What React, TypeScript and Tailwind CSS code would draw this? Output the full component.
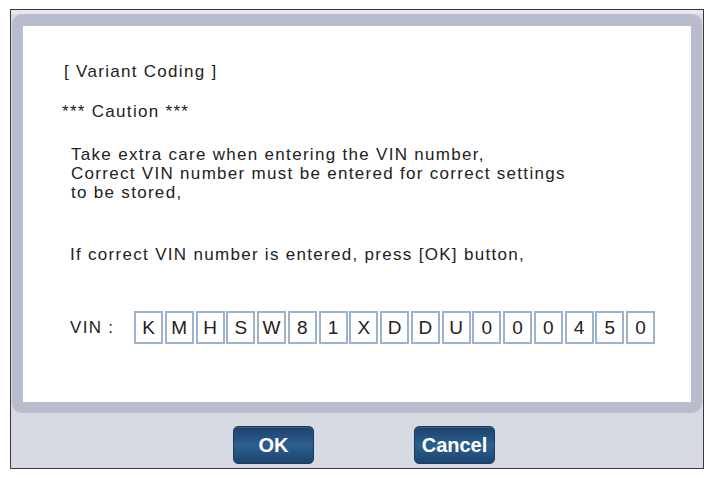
import React from 'react';

const vin = 'KMHSW81XDDU000450'.split('');

const textFont = { fontFamily: '"Liberation Sans", "Noto Sans CJK KR", sans-serif' };

const DialogButton: React.FC<{ label: string }> = ({ label }) => (
  <button
    className="w-[81px] h-[38px] rounded-[5px] border border-[#1a3a60] bg-gradient-to-b from-[#1d426c] via-[#2d5f8e] to-[#1d4570] text-white text-[20px] font-bold shadow-[inset_0_1px_0_rgba(255,255,255,0.15)]"
    style={textFont}
  >
    {label}
  </button>
);

export default function App() {
  return (
    <div className="w-[713px] h-[478px] bg-white pt-[9px] pl-[10px]" style={textFont}>
      {/* Frame */}
      <div className="w-[694px] h-[460px] border border-[#3a3a3a] bg-[#d5dae3] flex flex-col">
        <div className="h-[4px] bg-[#e6e9ef]" />
        {/* Panel */}
        <div className="mx-[1px] h-[399px] rounded-[10px] bg-[#b8bdcd] p-[11px] pt-[12px]">
          <div className="h-full bg-white pl-[41px] pt-[36px] text-[#222] text-[17px] leading-[19px] tracking-[1.3px]">
            <p>[ Variant Coding ]</p>
            <p className="mt-[21px] -ml-[2px]">*** Caution ***</p>
            <div className="mt-[24px] pl-[7px]">
              <p>Take extra care when entering the VIN number,</p>
              <p>Correct VIN number must be entered for correct settings</p>
              <p>to be stored,</p>
            </div>
            <p className="mt-[43px] pl-[6px]">If correct VIN number is entered, press [OK] button,</p>
            <div className="mt-[47px] flex items-center pl-[6px]">
              <span className="w-[64px]">VIN :</span>
              <div className="flex gap-[1.75px]">
                {vin.map((c, i) => (
                  <div
                    key={i}
                    className="w-[29px] h-[33px] border-2 border-[#9bb3cd] flex items-center justify-center text-[19px] tracking-normal text-[#222]"
                  >
                    {c}
                  </div>
                ))}
              </div>
            </div>
          </div>
        </div>
        {/* Buttons */}
        <div className="flex-1 flex items-center justify-center gap-[100px] pl-[14px] pt-[8px]">
          <DialogButton label="OK" />
          <DialogButton label="Cancel" />
        </div>
      </div>
    </div>
  );
}
